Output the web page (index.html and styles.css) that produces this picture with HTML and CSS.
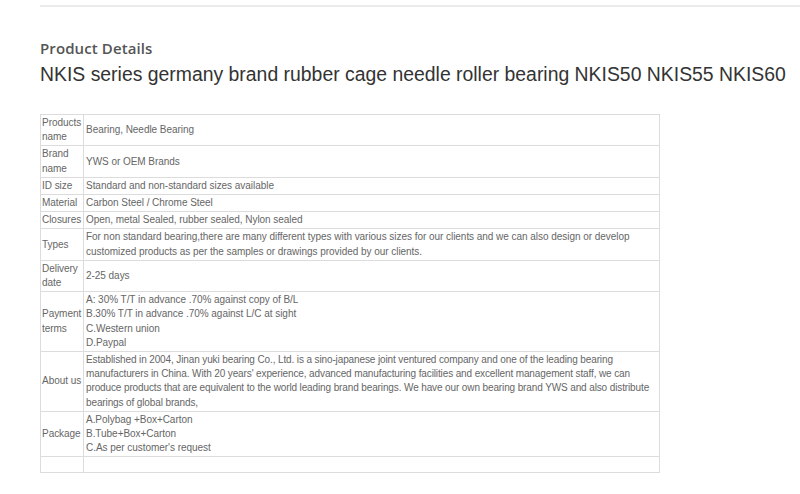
FILE: index.html
```html
<!DOCTYPE html>
<html>
<head>
<meta charset="utf-8">
<link rel="stylesheet" href="styles.css">
</head>
<body>
<div class="page">
  <hr class="topline">
  <h3 class="section">Product Details</h3>
  <h1 class="title">NKIS series germany brand rubber cage needle roller bearing NKIS50 NKIS55 NKIS60</h1>
  <table class="specs">
    <tr><td class="k">Products name</td><td>Bearing, Needle Bearing</td></tr>
    <tr><td class="k">Brand name</td><td>YWS or OEM Brands</td></tr>
    <tr><td class="k">ID size</td><td>Standard and non-standard sizes available</td></tr>
    <tr><td class="k">Material</td><td>Carbon Steel / Chrome Steel</td></tr>
    <tr><td class="k">Closures</td><td>Open, metal Sealed, rubber sealed, Nylon sealed</td></tr>
    <tr><td class="k">Types</td><td>For non standard bearing,there are many different types with various sizes for our clients and we can also design or develop customized products as per the samples or drawings provided by our clients.</td></tr>
    <tr><td class="k">Delivery date</td><td>2-25 days</td></tr>
    <tr><td class="k">Payment terms</td><td>A: 30% T/T in advance .70% against copy of B/L<br>B.30% T/T in advance .70% against L/C at sight<br>C.Western union<br>D.Paypal</td></tr>
    <tr><td class="k">About us</td><td class="tight">Established in 2004, Jinan yuki bearing Co., Ltd. is a sino-japanese joint ventured company and one of the leading bearing manufacturers in China. With 20 years' experience, advanced manufacturing facilities and excellent management staff, we can produce products that are equivalent to the world leading brand bearings. We have our own bearing brand YWS and also distribute bearings of global brands,</td></tr>
    <tr><td class="k">Package</td><td>A.Polybag +Box+Carton<br>B.Tube+Box+Carton<br>C.As per customer's request</td></tr>
    <tr class="empty"><td class="k"></td><td></td></tr>
  </table>
</div>
</body>
</html>
```
FILE: styles.css
```css
html, body {
  margin: 0;
  padding: 0;
  background: #ffffff;
}
.page {
  padding: 5px 0 0 40px;
}
.topline {
  border: 0;
  height: 2px;
  background: #ebebeb;
  margin: 0;
}
.section {
  font-family: "Open Sans", "Liberation Sans", sans-serif;
  font-weight: 600;
  font-size: 15px;
  color: #555555;
  margin: 31px 0 0 0;
  line-height: 20px;
  letter-spacing: 0.1px;
}
.title {
  font-family: "Liberation Sans", Arial, sans-serif;
  font-weight: normal;
  font-size: 19.4px;
  color: #333333;
  margin: 4px 0 0 0;
  line-height: 24px;
}
.specs {
  margin-top: 28px;
  width: 620px;
  border-collapse: collapse;
  font-family: "Liberation Sans", Arial, sans-serif;
  font-size: 10px;
  line-height: 14.2px;
  letter-spacing: -0.04px;
  color: #666666;
}
.specs td {
  border: 1px solid #dcdcdc;
  padding: 1px 0 1px 2px;
  vertical-align: middle;
}
.specs td.k {
  width: 41px;
  padding-left: 1px;
}
.specs td.tight {
  letter-spacing: -0.12px;
}
.specs tr.empty td {
  height: 13px;
}
```
